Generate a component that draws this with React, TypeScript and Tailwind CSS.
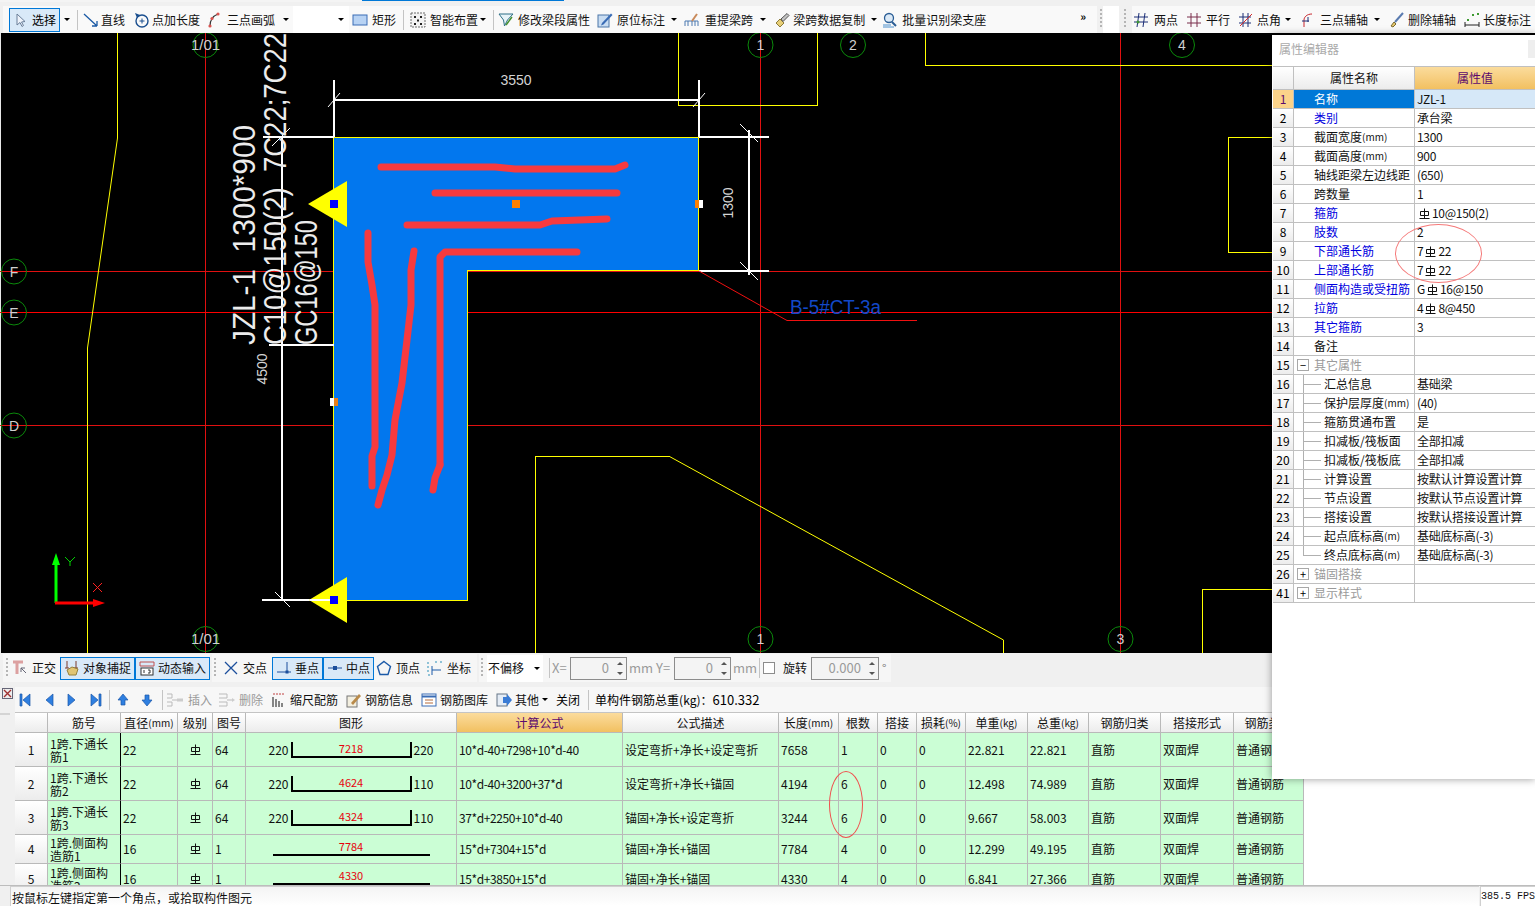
import { ReactNode } from "react";

const cnFont = "font-['Noto_Sans_CJK_SC','Liberation_Sans',sans-serif]";

// Rebar grade mark, the CAD font glyph has no unicode twin
function Rebar() {
  return (
    <svg width="11" height="12" viewBox="0 0 11 12" className="inline-block align-[-2px] mx-[2px]">
      <path d="M5.5 0.5V10M1.5 3.5H9.5V7.5H1.5ZM0.5 10.5H10.5" fill="none" stroke="#111" strokeWidth="1" />
    </svg>
  );
}

function withRebar(text: string) {
  const parts = text.split("§");
  return parts.map((p, i) => (
    <span key={i}>
      {i > 0 && <Rebar />}
      {p}
    </span>
  ));
}

// the "(mm)" units are set narrower than the CJK label in front of them
function withUnit(text: string) {
  const at = text.indexOf("(");
  if (at <= 0) return text;
  return (
    <>
      {text.slice(0, at)}
      <span className="text-[10px]">{text.slice(at)}</span>
    </>
  );
}

function Caret({ className = "" }: { className?: string }) {
  return <span className={`inline-block w-0 h-0 border-x-[3px] border-x-transparent border-t-[3px] border-t-black ${className}`} />;
}

function Sep({ className = "" }: { className?: string }) {
  return <span className={`inline-block w-px h-[20px] bg-[#c4c4c4] ${className}`} />;
}

function Grip({ className = "" }: { className?: string }) {
  return <span className={`inline-block w-[2px] h-[20px] bg-[repeating-linear-gradient(to_bottom,#b5b5b5_0,#b5b5b5_2px,transparent_2px,transparent_4px)] ${className}`} />;
}

function Ico({ children, w = 16 }: { children: ReactNode; w?: number }) {
  return (
    <svg width={w} height="16" viewBox={`0 0 ${w} 16`} className="shrink-0" fill="none">
      {children}
    </svg>
  );
}

function Tool({ icon, label, gap = "gap-1", className = "", gray = false }: { icon?: ReactNode; label: string; gap?: string; className?: string; gray?: boolean }) {
  return (
    <span className={`flex items-center shrink-0 ${gap} ${className} ${gray ? "text-[#9a9a9a]" : "text-[#111]"}`}>
      {icon}
      <span>{label}</span>
    </span>
  );
}

function TopBar() {
  return (
    <div className="h-[33px] shrink-0 flex flex-col text-xs leading-4">
      <div className="h-[2px] flex">
        <div className="w-[362px] bg-[#f4f4f4]" />
        <div className="w-[202px] h-px bg-[#0078d7]" />
      </div>
      <div className="flex-1 flex mt-[4px]">
        <div className="w-[1094px] ml-[3px] bg-[#f9f9f9] flex items-center">
          <span className="ml-[6px] w-[51px] h-[24px] flex items-center gap-[6px] pl-[4px] border border-[#0078d7] bg-[#d9e9f8]">
            <Ico w={12}>
              <path d="M3 2V13L6 10.5L8 14.5L9.5 13.5L7.5 10L11 9.5Z" fill="#eef3fb" stroke="#6b7f99" />
            </Ico>
            选择
          </span>
          <Caret className="ml-[4px]" />
          <Sep className="ml-[7px]" />
          <Tool
            className="ml-[5px]"
            gap="gap-[2px]"
            icon={
              <Ico>
                <path d="M1 2L14 14M14 14V9M14 14H9" stroke="#1b5aa5" strokeWidth="1.3" />
              </Ico>
            }
            label="直线"
          />
          <Tool
            className="ml-[8px]"
            gap="gap-[2px]"
            icon={
              <Ico w={17}>
                <circle cx="9" cy="9" r="6" stroke="#1b4f8f" strokeWidth="1.4" />
                <path d="M6.5 9H11.5M9 6.5V11.5" stroke="#1b4f8f" />
                <path d="M2 1L7 3L4 6Z" fill="#1b4f8f" />
              </Ico>
            }
            label="点加长度"
          />
          <Tool
            className="ml-[7px]"
            icon={
              <Ico>
                <path d="M3 14C3 8 6 4 11 2" stroke="#333" strokeWidth="1.2" />
                <circle cx="3" cy="14" r="1.6" fill="#d9534f" />
                <circle cx="5" cy="6.5" r="1.6" fill="#d9534f" />
                <circle cx="11" cy="2" r="1.6" fill="#d9534f" />
              </Ico>
            }
            label="三点画弧"
          />
          <Caret className="ml-[8px]" />
          <span className="ml-[4px] w-[56px] h-[27px] bg-white flex items-center justify-end pr-[5px]">
            <Caret />
          </span>
          <Tool
            className="ml-[3px]"
            icon={
              <Ico>
                <rect x="1" y="3" width="14" height="10" fill="#b7d2f3" stroke="#3a6cb5" />
              </Ico>
            }
            label="矩形"
          />
          <Sep className="ml-[7px]" />
          <Tool
            className="ml-[6px]"
            icon={
              <Ico>
                <rect x="1" y="1" width="14" height="14" fill="#f2f2f2" stroke="#6d6d6d" strokeDasharray="2 1" />
                <path d="M4 4H6V6H4ZM10 4H12V6H10ZM7 7.5H9V9.5H7ZM4 11H6V13H4ZM10 11H12V13H10Z" fill="#222" />
              </Ico>
            }
            label="智能布置"
          />
          <Caret className="ml-[2px]" />
          <Sep className="ml-[7px]" />
          <Tool
            className="ml-[4px]"
            icon={
              <Ico>
                <path d="M1 2H15L9.5 8L6.5 14L5.5 8Z" fill="#e7f3f8" stroke="#2d6f86" />
                <path d="M14 5L8 13" stroke="#46902f" strokeWidth="1.5" />
              </Ico>
            }
            label="修改梁段属性"
          />
          <Tool
            className="ml-[7px]"
            icon={
              <Ico>
                <rect x="1" y="3" width="11" height="12" fill="#c9ddf2" stroke="#4d77a8" />
                <path d="M5 11L14 1.5L15.5 3L6.5 12.5L4 13.5Z" fill="#3a6cb5" />
              </Ico>
            }
            label="原位标注"
          />
          <Caret className="ml-[6px]" />
          <Tool
            className="ml-[7px]"
            gap="gap-[5px]"
            icon={
              <Ico>
                <path d="M1 14V9H14V14M4 9V14M8 9V14M11 9V14" stroke="#4a78b0" />
                <path d="M8 9L13 2" stroke="#c98a5b" strokeWidth="2" />
              </Ico>
            }
            label="重提梁跨"
          />
          <Caret className="ml-[7px]" />
          <Tool
            className="ml-[7px]"
            gap="gap-[2px]"
            icon={
              <Ico w={18}>
                <path d="M3 11L7 7L11 11L7 15Z" fill="#e8cf77" stroke="#8a7a3a" />
                <path d="M8 7L14 1.5L16 3.5L10 9.5Z" fill="#c3c3c3" stroke="#555" />
              </Ico>
            }
            label="梁跨数据复制"
          />
          <Caret className="ml-[6px]" />
          <Tool
            className="ml-[5px]"
            icon={
              <Ico>
                <circle cx="7" cy="6" r="4.5" fill="#dbe9f6" stroke="#2a5d95" strokeWidth="1.3" />
                <path d="M10 10L14 14" stroke="#2a5d95" strokeWidth="2" />
                <path d="M1 13H9M1 15H12" stroke="#4b8ecb" />
              </Ico>
            }
            label="批量识别梁支座"
          />
          <span className="ml-[94px] mb-[8px] text-[11px] leading-3 font-bold">»</span>
        </div>
        <Grip className="ml-[3px] mt-[3px]" />
        <span className="w-[16px] h-[27px] bg-white ml-[1px]" />
        <Grip className="ml-[5px] mt-[3px]" />
        <div className="ml-[6px] flex-1 bg-[#f9f9f9] flex items-center overflow-hidden">
          <Tool
            className="ml-[1px]"
            gap="gap-[5px]"
            icon={
              <Ico>
                <path d="M1 5H15M1 10H15" stroke="#1c2f77" />
                <path d="M6 1L4 15M12 1L10 15" stroke="#1c2f77" />
                <circle cx="5" cy="10" r="1.5" fill="#3f9a32" />
              </Ico>
            }
            label="两点"
          />
          <Tool
            className="ml-[8px]"
            gap="gap-[4px]"
            icon={
              <Ico>
                <path d="M1 5H15M1 11H15M5 1V15M11 1V15" stroke="#7b2f4c" />
              </Ico>
            }
            label="平行"
          />
          <Tool
            className="ml-[8px]"
            gap="gap-[3px]"
            icon={
              <Ico>
                <path d="M1 5H13M1 11H13M5 1V15M10 1V15" stroke="#1c2f77" />
                <path d="M2 14L14 2" stroke="#d62c2c" />
              </Ico>
            }
            label="点角"
          />
          <Caret className="ml-[4px]" />
          <Tool
            className="ml-[10px]"
            gap="gap-[6px]"
            icon={
              <Ico w={13}>
                <path d="M3 15V8C3 5 6 2 11 2" stroke="#c8242c" />
                <path d="M1 9H8M7 5V10" stroke="#1c2f77" />
              </Ico>
            }
            label="三点辅轴"
          />
          <Caret className="ml-[6px]" />
          <Tool
            className="ml-[9px]"
            gap="gap-[3px]"
            icon={
              <Ico>
                <path d="M2 14L5 10L7 12L4 15Z" fill="#e5c66c" stroke="#7a6a30" />
                <path d="M6 10L14 1" stroke="#5a7bb0" strokeWidth="2" />
              </Ico>
            }
            label="删除辅轴"
          />
          <Tool
            className="ml-[8px]"
            gap="gap-[3px]"
            icon={
              <Ico>
                <path d="M1 10V15M15 10V15M1 13H15" stroke="#222" />
                <path d="M3 8H5M8 3H10M13 2H15" stroke="#3f9a32" strokeWidth="2" />
              </Ico>
            }
            label="长度标注"
          />
        </div>
      </div>
    </div>
  );
}

function Bubble({ x, y, label, size = 14 }: { x: number; y: number; label: string; size?: number }) {
  return (
    <g>
      <circle cx={x} cy={y} r="12.5" fill="none" stroke="#0b8a0b" />
      <text x={x} y={y + 5} textAnchor="middle" fontSize={size} fill="#d0d0d0" className="font-['Liberation_Sans',sans-serif]">
        {label}
      </text>
    </g>
  );
}

function Canvas() {
  return (
    <div className="h-[620px] shrink-0 bg-black">
      <svg width="1535" height="620" viewBox="0 33 1535 620" className="block">
        <path d="M0.5 33V653" stroke="#e8e8e8" shapeRendering="crispEdges" />
        {/* axis lines */}
        <g stroke="#e01010" strokeWidth="1" shapeRendering="crispEdges">
          <path d="M205.5 33V653M760.5 33V653M1120.5 33V653M0 271.5H1272M0 425.5H1272" />
        </g>
        <path d="M0 312.5H1272" stroke="#ff0000" shapeRendering="crispEdges" />

        {/* neighbouring beams */}
        <g fill="none" stroke="#ffff00" strokeWidth="1" shapeRendering="crispEdges">
          <path d="M678.5 33V105.5H817.5V33" />
          <path d="M925.5 33V65.5H1272" />
          <path d="M1272 137.5H1228.5V252.5H1272" />
          <path d="M1272 589.5H1202.5V653" />
          <path d="M535.5 653V456.5H669.5" />
          <path d="M1003.5 653V640" />
        </g>
        <g fill="none" stroke="#ffff00">
          <path d="M87.5 653V348L117.5 138V33" />
          <path d="M669.5 456.5L1003.5 640" />
        </g>

        {/* selected beam */}
        <path d="M333.5 137.5H698.5V270.5H467.5V600.5H333.5Z" fill="#0277ee" stroke="#ffff00" shapeRendering="crispEdges" />

        {/* dimensions */}
        <g stroke="#ffffff" fill="none">
          <path d="M328 107L340 93M693 107L705 93M740 124L758 142M740 262L758 280M275 592L290 607M272 146L290 128" strokeWidth="1" />
          <g strokeWidth="2" shapeRendering="crispEdges">
            <path d="M334 80V137M699 80V137M334 100H699M263 137H334M699 137H769M699 271H769M749 130V275M282 137V600M269 345H334M262 600H334" />
          </g>
        </g>
        <g fill="#d4d4d4" className="font-['Liberation_Sans',sans-serif]">
          <text x="516" y="85" textAnchor="middle" fontSize="14">3550</text>
          <text transform="translate(733,203) rotate(-90)" textAnchor="middle" fontSize="14">1300</text>
          <text transform="translate(267,369) rotate(-90)" textAnchor="middle" fontSize="14">4500</text>
        </g>
        <g fill="#ececec" fontSize="31" className="font-['Liberation_Sans',sans-serif]">
          <text transform="translate(255,345) rotate(-90)" textLength="220" lengthAdjust="spacingAndGlyphs">{"JZL-1\u00a0\u00a01300*900"}</text>
          <text transform="translate(286,345) rotate(-90)" textLength="312" lengthAdjust="spacingAndGlyphs">{"C10@150(2)\u00a0\u00a07C22;7C22"}</text>
          <text transform="translate(317,345) rotate(-90)" textLength="125" lengthAdjust="spacingAndGlyphs">GC16@150</text>
        </g>

        {/* grips */}
        <path d="M308 204L347 181V227Z" fill="#ffff00" />
        <path d="M309 600L347 577V623Z" fill="#ffff00" />
        <path d="M310 600H334" stroke="#ffffff" strokeWidth="2" shapeRendering="crispEdges" />
        <rect x="330" y="200" width="8" height="8" fill="#0000ff" />
        <rect x="330" y="596" width="8" height="8" fill="#0000ff" />
        <rect x="512" y="200" width="8" height="8" fill="#ff8000" />
        <rect x="695" y="200" width="4" height="8" fill="#ff8000" />
        <rect x="699" y="200" width="4" height="8" fill="#ffffff" />
        <rect x="330" y="398" width="4" height="8" fill="#ffffff" />
        <rect x="334" y="398" width="4" height="8" fill="#e8801a" />

        {/* hand drawn marks */}
        <g fill="none" stroke="#f73a3e" strokeWidth="7" strokeLinecap="round" strokeLinejoin="round">
          <path d="M381 167H495L515 169H615L625 165" />
          <path d="M435 193H617" />
          <path d="M407 225H540L552 221L607 219" />
          <path d="M368 233V262L372 285L375 305V447L372 456V486" />
          <path d="M414 251L411 270V305L407 340L402 383L395 420L392 455L387 475L382 490L378 505" />
          <path d="M440 465V257L445 252H577" />
          <path d="M440 465L435 478L433 490" />
        </g>

        {/* note */}
        <text x="790" y="314" fontSize="20" fill="#1248c8" className="font-['Liberation_Sans',sans-serif]" textLength="91" lengthAdjust="spacingAndGlyphs">B-5#CT-3a</text>
        <path d="M699 271L787 320.5H917" fill="none" stroke="#f01010" />

        <Bubble x={205.5} y={45} label="1/01" size={15} />
        <Bubble x={205.5} y={639} label="1/01" size={15} />
        <Bubble x={760.5} y={45} label="1" />
        <Bubble x={853} y={45} label="2" />
        <Bubble x={1182} y={45} label="4" />
        <Bubble x={760.5} y={639} label="1" />
        <Bubble x={1120.5} y={639} label="3" />
        <Bubble x={14} y={271.5} label="F" />
        <Bubble x={14} y={312.5} label="E" />
        <Bubble x={14} y={425.5} label="D" />

        {/* ucs */}
        <path d="M56 603V560" stroke="#00ff00" strokeWidth="3" />
        <path d="M56 553L52 565H60Z" fill="#00ff00" />
        <path d="M55 603H98" stroke="#ff0000" strokeWidth="3" />
        <path d="M105 603L93 599V607Z" fill="#ff0000" />
        <path d="M65 557L70 562L75 557M70 562V566" stroke="#00d000" fill="none" />
        <path d="M93 583L102 592M102 583L93 592" stroke="#ff2020" fill="none" />
      </svg>
    </div>
  );
}

function Snap({ icon, label, active = false, width }: { icon: ReactNode; label: string; active?: boolean; width: string }) {
  return (
    <span className={`h-[23px] flex items-center justify-center gap-[3px] shrink-0 ${width} ${active ? "border border-[#0078d7] bg-[#d9e9f8]" : ""}`}>
      {icon}
      {label}
    </span>
  );
}

function Spin({ value, width }: { value: string; width: string }) {
  return (
    <span className={`h-[23px] border border-[#8c8c8c] bg-[#f4f4f4] flex items-center justify-end text-[#9a9a9a] text-[13px] shrink-0 ${width}`}>
      <span className="mr-[5px]">{value}</span>
      <span className="w-[11px] flex flex-col items-center gap-[7px] mr-px">
        <span className="w-0 h-0 border-x-[3px] border-x-transparent border-b-[3px] border-b-[#555]" />
        <span className="w-0 h-0 border-x-[3px] border-x-transparent border-t-[3px] border-t-[#555]" />
      </span>
    </span>
  );
}

function SnapBar() {
  return (
    <div className="h-[34px] shrink-0 bg-[#f0f0f0] flex items-start pt-px text-xs text-[#111]">
      <div className="ml-[3px] w-[207px] h-[28px] bg-[#f6f6f6] flex items-center">
        <Grip className="ml-[3px]" />
        <span className="ml-[4px] w-[16px] shrink-0">
          <Ico>
            <path d="M1 2H11M5 2V14" stroke="#dca0a0" strokeWidth="3" />
            <path d="M9 8L14 13M9 8V12M9 8H13" stroke="#667" />
          </Ico>
        </span>
        <span className="ml-[4px] w-[29px]">正交</span>
        <Snap
          active
          width="w-[75px]"
          label="对象捕捉"
          icon={
            <Ico>
              <path d="M3 1V8M12 1V8M1 8H5M10 8H14" stroke="#7b3a2a" />
              <path d="M3 10L8 7L14 9L12 15H5Z" fill="#e1c574" stroke="#96803a" />
            </Ico>
          }
        />
        <Snap
          active
          width="w-[75px]"
          label="动态输入"
          icon={
            <Ico>
              <path d="M1 2H15M1 6H15M1 2V6M15 2V6" stroke="#c05050" />
              <rect x="2" y="8" width="12" height="7" fill="#fff" stroke="#333" />
              <path d="M5 10V13M9 10H11V13H9" stroke="#333" />
            </Ico>
          }
        />
      </div>
      <div className="ml-[2px] w-[265px] h-[28px] bg-[#f6f6f6] flex items-center">
        <Grip className="ml-[2px]" />
        <span className="ml-[7px] flex items-center gap-[4px] shrink-0">
          <Ico>
            <path d="M2 2L14 14M14 2L2 14" stroke="#1c4f9c" strokeWidth="1.3" />
          </Ico>
          交点
        </span>
        <span className="ml-[5px] flex">
          <Snap
            active
            width="w-[51px]"
            label="垂点"
            icon={
              <Ico>
                <path d="M1 12H15M11 2V12" stroke="#1c4f9c" />
                <rect x="9.5" y="10.5" width="3" height="3" fill="#1c4f9c" />
              </Ico>
            }
          />
          <Snap
            active
            width="w-[51px]"
            label="中点"
            icon={
              <Ico>
                <path d="M1 8H15" stroke="#1c4f9c" />
                <rect x="6" y="6" width="4" height="4" fill="#1c4f9c" />
              </Ico>
            }
          />
        </span>
        <span className="ml-[2px] flex items-center gap-[4px] shrink-0">
          <Ico>
            <path d="M8 1.5L14.5 6.5L12 14.5H4L1.5 6.5Z" stroke="#1c5aa8" strokeWidth="1.4" />
          </Ico>
          顶点
        </span>
        <span className="ml-[7px] flex items-center gap-[4px] shrink-0">
          <Ico>
            <path d="M5 15V6M5 10H14" stroke="#1c5aa8" />
            <path d="M1 2V14M14 1V3M9 1V3M1 15H3" stroke="#2a8fb8" strokeDasharray="2 2" />
          </Ico>
          坐标
        </span>
      </div>
      <div className="ml-[2px] flex-1 h-[28px] flex items-center">
        <div className="w-[412px] h-full bg-[#f6f6f6] flex items-center">
          <Grip className="ml-[2px]" />
          <span className="ml-[4px] w-[56px] h-[27px] bg-white flex items-center justify-between pl-[1px] pr-[3px] shrink-0">
            不偏移
            <Caret />
          </span>
          <Sep className="ml-[6px]" />
          <span className="ml-[2px] w-[18px] text-[#9a9a9a] text-[13px]">X=</span>
          <Spin value="0" width="w-[57px]" />
          <span className="ml-[2px] w-[27px] text-[#9a9a9a] text-[13px]">mm</span>
          <span className="w-[18px] text-[#9a9a9a] text-[13px]">Y=</span>
          <Spin value="0" width="w-[57px]" />
          <span className="ml-[2px] w-[26px] text-[#9a9a9a] text-[13px]">mm</span>
          <Sep />
          <span className="ml-[3px] w-[12px] h-[12px] border border-[#8c8c8c] bg-white shrink-0" />
          <span className="ml-[8px] w-[28px] shrink-0">旋转</span>
          <Spin value="0.000" width="w-[68px]" />
          <span className="ml-[3px] text-[#777]">°</span>
        </div>
      </div>
    </div>
  );
}

function NavIcon({ d }: { d: string }) {
  return (
    <Ico w={12}>
      <path d={d} fill="#2f7fe0" stroke="#1b56a8" strokeWidth="0.7" />
    </Ico>
  );
}

function DataBar() {
  return (
    <div className="h-[26px] shrink-0 flex text-xs">
      <div className="w-[15px] relative">
        <svg width="11" height="11" viewBox="0 0 11 11" className="ml-[2px] mt-px">
          <rect x="0.5" y="0.5" width="10" height="10" fill="#eee" stroke="#667" />
          <path d="M2 2L9 9M9 2L2 9" stroke="#a03030" strokeWidth="1.4" />
        </svg>
      </div>
      <div className="flex-1 bg-[#f7f7f7] flex items-center border-b border-b-[#c4c4c4]">
        <span className="ml-[4px]">
          <NavIcon d="M1 2H3V14H1ZM11 2V14L4 8Z" />
        </span>
        <span className="ml-[12px]">
          <NavIcon d="M10 2V14L3 8Z" />
        </span>
        <span className="ml-[11px]">
          <NavIcon d="M2 2V14L9 8Z" />
        </span>
        <span className="ml-[12px]">
          <NavIcon d="M9 2H11V14H9ZM1 2V14L8 8Z" />
        </span>
        <Sep className="ml-[7px]" />
        <span className="ml-[7px]">
          <NavIcon d="M6 2L11 8H8V13H4V8H1Z" />
        </span>
        <span className="ml-[12px]">
          <NavIcon d="M6 14L11 8H8V3H4V8H1Z" />
        </span>
        <Sep className="ml-[9px]" />
        <Tool
          gray
          className="ml-[3px]"
          icon={
            <Ico w={18}>
              <path d="M1 2H6V6H1M1 10H6V14H1M6 8H11" stroke="#bbb" />
              <rect x="11" y="6.5" width="6" height="3" fill="#ccc" />
            </Ico>
          }
          label="插入"
        />
        <Tool
          gray
          className="ml-[6px]"
          gap="gap-[3px]"
          icon={
            <Ico w={18}>
              <path d="M1 2H9V6H1M1 10H9V14H1M9 8H14" stroke="#bbb" />
              <path d="M14 6L17 8L14 10Z" fill="#ccc" />
            </Ico>
          }
          label="删除"
        />
        <Tool
          className="ml-[8px]"
          gap="gap-[3px]"
          icon={
            <Ico>
              <path d="M2 5V15M5 7V15M8 9V15M11 11V15" stroke="#555" strokeWidth="1.4" />
              <path d="M2 2H14" stroke="#c04040" strokeDasharray="2 1" />
            </Ico>
          }
          label="缩尺配筋"
        />
        <Tool
          className="ml-[8px]"
          gap="gap-[3px]"
          icon={
            <Ico>
              <rect x="1" y="4" width="10" height="11" fill="#f3efe0" stroke="#777" />
              <path d="M5 11L13 2L15 4L7 13Z" fill="#b98a4a" />
            </Ico>
          }
          label="钢筋信息"
        />
        <Tool
          className="ml-[8px]"
          gap="gap-[3px]"
          icon={
            <Ico>
              <rect x="1" y="2" width="14" height="12" fill="#fff" stroke="#3a6cb5" />
              <path d="M1 4.5H15" stroke="#3a6cb5" strokeWidth="2" />
              <path d="M4 8H12M4 11H12" stroke="#b56a3a" />
            </Ico>
          }
          label="钢筋图库"
        />
        <Tool
          className="ml-[8px]"
          gap="gap-[3px]"
          icon={
            <Ico>
              <rect x="1" y="2" width="10" height="12" fill="#e4ecf6" stroke="#678" />
              <path d="M7 5H11V2L16 8L11 14V11H7Z" fill="#3a7bd5" />
            </Ico>
          }
          label="其他"
        />
        <Caret className="ml-[3px]" />
        <span className="ml-[8px]">关闭</span>
        <Sep className="ml-[8px]" />
        <span className="ml-[6px] whitespace-nowrap">
          单构件钢筋总重(kg)：<span className="text-[13px]">610.332</span>
        </span>
      </div>
    </div>
  );
}

const headers = ["", "筋号", "直径(mm)", "级别", "图号", "图形", "计算公式", "公式描述", "长度(mm)", "根数", "搭接", "损耗(%)", "单重(kg)", "总重(kg)", "钢筋归类", "搭接形式", "钢筋类型"];

type BarRow = { no: string; name: string; dia: string; fig: string; left?: string; mid: string; right?: string; formula: string; desc: string; len: string; qty: string; unit: string; total: string };

const barRows: BarRow[] = [
  { no: "1", name: "1跨.下通长筋1", dia: "22", fig: "64", left: "220", mid: "7218", right: "220", formula: "10*d-40+7298+10*d-40", desc: "设定弯折+净长+设定弯折", len: "7658", qty: "1", unit: "22.821", total: "22.821" },
  { no: "2", name: "1跨.下通长筋2", dia: "22", fig: "64", left: "220", mid: "4624", right: "110", formula: "10*d-40+3200+37*d", desc: "设定弯折+净长+锚固", len: "4194", qty: "6", unit: "12.498", total: "74.989" },
  { no: "3", name: "1跨.下通长筋3", dia: "22", fig: "64", left: "220", mid: "4324", right: "110", formula: "37*d+2250+10*d-40", desc: "锚固+净长+设定弯折", len: "3244", qty: "6", unit: "9.667", total: "58.003" },
  { no: "4", name: "1跨.侧面构造筋1", dia: "16", fig: "1", mid: "7784", formula: "15*d+7304+15*d", desc: "锚固+净长+锚固", len: "7784", qty: "4", unit: "12.299", total: "49.195" },
  { no: "5", name: "1跨.侧面构造筋2", dia: "16", fig: "1", mid: "4330", formula: "15*d+3850+15*d", desc: "锚固+净长+锚固", len: "4330", qty: "4", unit: "6.841", total: "27.366" },
];

const cell = "border-r border-b border-[#b9b9b9] bg-[#cbfed5] flex items-center pl-[2px] overflow-hidden whitespace-nowrap";

function Shape({ row }: { row: BarRow }) {
  if (!row.left) {
    return (
      <div className="border-r border-b border-[#b9b9b9] bg-[#cbfed5] flex justify-center items-start pt-[4px] overflow-hidden">
        <div className="w-[157px] h-[17px] border-b-2 border-b-black text-center text-red-600 text-[11px] leading-[15px]">{row.mid}</div>
      </div>
    );
  }
  return (
    <div className="border-r border-b border-[#b9b9b9] bg-[#cbfed5] flex justify-center items-center overflow-hidden">
      <span className="w-[20px] text-right">{row.left}</span>
      <div className="ml-[2px] w-[121px] h-[16px] border-x-2 border-b-2 border-black text-center text-red-600 text-[11px] leading-[13px]">{row.mid}</div>
      <span className="ml-[2px] w-[20px]">{row.right}</span>
    </div>
  );
}

function BarTable() {
  return (
    <div className="h-[173px] shrink-0 flex relative bg-white text-xs text-[#111] border-b border-b-[#bdbdbd]">
      <div className="w-[15px] bg-[#f0f0f0] bg-[repeating-linear-gradient(to_bottom,#d4d4d4_0,#d4d4d4_2px,transparent_2px,transparent_5px)] bg-[length:10px_5px] bg-no-repeat" />
      <div className="w-[1289px] h-[172px] overflow-hidden grid grid-cols-[33px_73px_57px_35px_33px_211px_166px_156px_60px_39px_39px_49px_62px_61px_72px_73px_70px] grid-rows-[20px_34px_34px_34px_29px_31px] border-r border-[#b9b9b9]">
        {headers.map((h, i) => (
          <div
            key={i}
            className={`border-r border-b border-[#b9b9b9] flex items-center justify-center overflow-hidden whitespace-nowrap ${
              i === 6 ? "bg-gradient-to-b from-[#fbdc9c] to-[#f2c060] text-[#5c0a6e]" : "bg-gradient-to-b from-white to-[#ececec]"
            }`}
          >
            {withUnit(h)}
          </div>
        ))}
        {barRows.map((r) => (
          <div key={r.no} className="contents">
            <div className="border-r border-b border-[#b9b9b9] bg-gradient-to-b from-white to-[#ececec] flex items-center justify-center">{r.no}</div>
            <div className="border-r border-r-black border-b border-b-[#b9b9b9] bg-[#cbfed5] pl-[2px] pr-[6px] leading-[13px] flex items-center overflow-hidden">{r.name}</div>
            <div className={cell}>{r.dia}</div>
            <div className={`${cell} justify-center !pl-0`}>
              <Rebar />
            </div>
            <div className={cell}>{r.fig}</div>
            <Shape row={r} />
            <div className={`${cell} tracking-[-0.4px]`}>{r.formula}</div>
            <div className={cell}>{r.desc}</div>
            <div className={cell}>{r.len}</div>
            <div className={cell}>{r.qty}</div>
            <div className={cell}>0</div>
            <div className={cell}>0</div>
            <div className={cell}>{r.unit}</div>
            <div className={cell}>{r.total}</div>
            <div className={cell}>直筋</div>
            <div className={cell}>双面焊</div>
            <div className={cell}>普通钢筋</div>
          </div>
        ))}
      </div>
      {/* hand drawn circle over the 根数 column */}
      <div className="absolute left-[829px] top-[58px] w-[34px] h-[67px] rounded-[50%] border border-[#f0504e]" />
    </div>
  );
}

function StatusBar() {
  return (
    <div className="h-[20px] shrink-0 flex text-xs text-[#111] bg-[#f0f0f0]">
      <div className="ml-[10px] w-[1469px] bg-gradient-to-b from-[#f4f4f4] to-white border-l border-t border-[#d0d0d0] pl-[1px] leading-[22px] whitespace-nowrap">按鼠标左键指定第一个角点，或拾取构件图元</div>
      <div className="ml-px flex-1 border-l border-t border-[#d0d0d0] bg-white font-['Liberation_Mono',monospace] text-[10px] leading-[20px] whitespace-nowrap">385.5 FPS</div>
    </div>
  );
}

type Prop = { n: string; name: string; value?: string; tone?: "blue" | "gray"; child?: boolean; last?: boolean; box?: "+" | "-" };

const props: Prop[] = [
  { n: "1", name: "名称", value: "JZL-1" },
  { n: "2", name: "类别", value: "承台梁", tone: "blue" },
  { n: "3", name: "截面宽度(mm)", value: "1300" },
  { n: "4", name: "截面高度(mm)", value: "900" },
  { n: "5", name: "轴线距梁左边线距", value: "(650)" },
  { n: "6", name: "跨数量", value: "1" },
  { n: "7", name: "箍筋", value: "§10@150(2)", tone: "blue" },
  { n: "8", name: "肢数", value: "2", tone: "blue" },
  { n: "9", name: "下部通长筋", value: "7§22", tone: "blue" },
  { n: "10", name: "上部通长筋", value: "7§22", tone: "blue" },
  { n: "11", name: "侧面构造或受扭筋", value: "G§16@150", tone: "blue" },
  { n: "12", name: "拉筋", value: "4§8@450", tone: "blue" },
  { n: "13", name: "其它箍筋", value: "3", tone: "blue" },
  { n: "14", name: "备注" },
  { n: "15", name: "其它属性", tone: "gray", box: "-" },
  { n: "16", name: "汇总信息", value: "基础梁", child: true },
  { n: "17", name: "保护层厚度(mm)", value: "(40)", child: true },
  { n: "18", name: "箍筋贯通布置", value: "是", child: true },
  { n: "19", name: "扣减板/筏板面", value: "全部扣减", child: true },
  { n: "20", name: "扣减板/筏板底", value: "全部扣减", child: true },
  { n: "21", name: "计算设置", value: "按默认计算设置计算", child: true },
  { n: "22", name: "节点设置", value: "按默认节点设置计算", child: true },
  { n: "23", name: "搭接设置", value: "按默认搭接设置计算", child: true },
  { n: "24", name: "起点底标高(m)", value: "基础底标高(-3)", child: true },
  { n: "25", name: "终点底标高(m)", value: "基础底标高(-3)", child: true, last: true },
  { n: "26", name: "锚固搭接", tone: "gray", box: "+" },
  { n: "41", name: "显示样式", tone: "gray", box: "+" },
];

function PropRow({ p }: { p: Prop }) {
  const selected = p.n === "1";
  const tone = selected ? "text-white bg-[#0078d7]" : p.tone === "blue" ? "text-[#0000e0]" : p.tone === "gray" ? "text-[#9a9a9a]" : "text-[#111]";
  return (
    <div className="contents">
      <div className={`border-r border-b border-[#c0c0c0] flex items-center justify-center ${selected ? "bg-[#fbd38a] text-[#5c0a6e]" : "bg-gradient-to-b from-white to-[#ececec]"}`}>{p.n}</div>
      <div className={`relative border-r border-b border-[#c0c0c0] flex items-center whitespace-nowrap overflow-hidden ${tone} ${p.child ? "pl-[30px]" : "pl-[20px]"}`}>
        {p.box && (
          <span className="absolute left-[3px] top-[3px] w-[12px] h-[12px] border border-[#a8a8a8] flex items-center justify-center text-black text-[11px] leading-[10px] bg-white">
            {p.box === "+" ? "+" : "−"}
          </span>
        )}
        {p.child && (
          <>
            <span className={`absolute left-[9px] top-0 w-px bg-[#b0b0b0] ${p.last ? "h-[10px]" : "h-[19px]"}`} />
            <span className="absolute left-[9px] top-[9px] w-[18px] h-px bg-[#b0b0b0]" />
          </>
        )}
        {withUnit(p.name)}
      </div>
      <div className={`border-b border-[#c0c0c0] flex items-center pl-[2px] whitespace-nowrap overflow-hidden text-[#111] tracking-[-0.3px] ${selected ? "bg-[#d6e8f8]" : ""}`}>{p.value ? withRebar(p.value) : null}</div>
    </div>
  );
}

function PropertyPanel() {
  return (
    <div className="absolute left-[1272px] top-[35px] w-[263px] h-[744px] bg-white shadow-[0_0_8px_rgba(0,0,0,0.4)] text-xs">
      <div className="h-[31px] flex items-center justify-between text-[#aaa] pl-[7px] pb-[4px]">
        <span>属性编辑器</span>
        <span className="w-[7px] h-[18px] bg-[#eee]" />
      </div>
      <div className="ml-px grid grid-cols-[21px_121px_120px] grid-rows-[23px] auto-rows-[19px] border-t border-[#c0c0c0]">
        <div className="border-r border-b border-[#c0c0c0] bg-gradient-to-b from-white to-[#ececec]" />
        <div className="border-r border-b border-[#c0c0c0] bg-gradient-to-b from-white to-[#ececec] flex items-center justify-center text-[#111]">属性名称</div>
        <div className="border-b border-[#c0c0c0] bg-gradient-to-b from-[#fbdc9c] to-[#f2c060] flex items-center justify-center text-[#5c0a6e]">属性值</div>
        {props.map((p) => (
          <PropRow key={p.n} p={p} />
        ))}
      </div>
      {/* hand drawn circle over 上下部通长筋 */}
      <div className="absolute left-[123px] top-[189px] w-[87px] h-[59px] rounded-[50%] border border-[#f57a7a]" />
    </div>
  );
}

export default function App() {
  return (
    <div className={`w-[1535px] h-[906px] relative overflow-hidden bg-[#f0f0f0] flex flex-col ${cnFont}`}>
      <TopBar />
      <Canvas />
      <SnapBar />
      <DataBar />
      <BarTable />
      <StatusBar />
      <PropertyPanel />
    </div>
  );
}
